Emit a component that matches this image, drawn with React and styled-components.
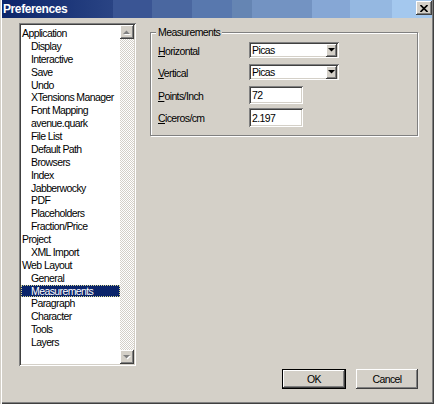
import React from "react";
import styled, { createGlobalStyle } from "styled-components";

const Global = createGlobalStyle`
  html, body { margin: 0; padding: 0; background: #d4d0c8; }
  body { overflow: hidden; }
`;

const raised = `
  box-shadow: inset -1px -1px 0 #404040, inset 1px 1px 0 #ffffff,
    inset -2px -2px 0 #808080, inset 2px 2px 0 #d4d0c8;
`;
const sunken = `
  box-shadow: inset 1px 1px 0 #808080, inset -1px -1px 0 #ffffff,
    inset 2px 2px 0 #404040, inset -2px -2px 0 #d4d0c8;
`;

const Window = styled.div`
  width: 434px;
  height: 404px;
  box-sizing: border-box;
  background: #d4d0c8;
  padding: 0 2px 2px 2px;
  box-shadow: inset 1px 0 0 #d4d0c8, inset 2px 0 0 #ffffff,
    inset -1px -1px 0 #404040, inset -2px -2px 0 #808080;
  display: flex;
  flex-direction: column;
  font-family: "Liberation Sans", Arial, sans-serif;
  font-size: 10.5px;
  letter-spacing: -0.6px;
  color: #000;
`;

const TitleBar = styled.div`
  height: 18px;
  flex: none;
  display: flex;
  align-items: center;
  justify-content: space-between;
  padding: 0 0 0 1px;
  background: linear-gradient(
    90deg,
    #0a246a 0px,
    #2a4484 111px,
    #3a5594 111px,
    #3a5594 150px,
    #4a67a0 150px,
    #4a67a0 190px,
    #5878ae 190px,
    #5878ae 230px,
    #6585b3 230px,
    #6585b3 250px,
    #7393c2 250px,
    #7393c2 310px,
    #86a7d5 310px,
    #86a7d5 348px,
    #95b8e1 348px,
    #95b8e1 390px,
    #a4c8ee 390px
  );
`;

const Title = styled.span`
  color: #fff;
  font-weight: bold;
  font-size: 12px;
  letter-spacing: -0.4px;
  line-height: 18px;
`;

const CloseButton = styled.div`
  width: 16px;
  height: 14px;
  margin-right: 0px;
  margin-top: -2px;
  background: #d4d0c8;
  ${raised}
  display: flex;
  align-items: center;
  justify-content: center;
`;

const Body = styled.div`
  flex: 1;
  display: flex;
  align-items: flex-start;
  padding: 5px 14px 0 17px;
`;

const ListBox = styled.div`
  width: 117px;
  height: 343px;
  box-sizing: border-box;
  background: #fff;
  ${sunken}
  padding: 2px;
  display: flex;
`;

const Items = styled.div`
  flex: 1;
  padding-top: 2px;
  overflow: hidden;
`;

const Item = styled.div`
  height: 12.875px;
  line-height: 12.875px;
  white-space: nowrap;
  box-sizing: border-box;
  padding-left: ${(p) => (p.$level ? 10 : 1)}px;
  background: ${(p) => (p.$selected ? "#0a246a" : "transparent")};
  color: ${(p) => (p.$selected ? "#fff" : "#000")};
  outline: ${(p) => (p.$selected ? "1px dotted #d8d890" : "none")};
  outline-offset: -1px;
`;

const ScrollBar = styled.div`
  width: 14px;
  display: flex;
  flex-direction: column;
  background: repeating-conic-gradient(#d4d0c8 0 25%, #ffffff 0 50%) 0 0 / 2px 2px;
`;

const ScrollButton = styled.div`
  width: 14px;
  height: 14px;
  flex: none;
  background: #d4d0c8;
  ${raised}
  display: flex;
  align-items: center;
  justify-content: center;
`;

const Track = styled.div`
  flex: 1;
`;

const RightColumn = styled.div`
  margin-left: 14px;
  width: 268px;
  height: 366px;
  display: flex;
  flex-direction: column;
`;

const GroupBox = styled.div`
  position: relative;
  margin-top: 9px;
  box-sizing: border-box;
  width: 268px;
  border: 1px solid #808080;
  box-shadow: 1px 1px 0 #fff, inset 1px 1px 0 #fff;
  padding: 9px 8px 8px 7px;
  display: flex;
  flex-direction: column;
`;

const Legend = styled.span`
  position: absolute;
  top: -7px;
  left: 5px;
  padding: 0 2px;
  line-height: 13px;
  background: #d4d0c8;
`;

const Row = styled.div`
  display: grid;
  grid-template-columns: 91px auto;
  align-items: center;
  margin-top: ${(p) => p.$gap || 0}px;
`;

const Label = styled.span`
  line-height: 13px;
  padding-top: 2px;
`;

const Mnemonic = styled.span`
  text-decoration: underline;
`;

const Select = styled.div`
  width: 90px;
  height: 16px;
  box-sizing: border-box;
  background: #fff;
  ${sunken}
  display: flex;
  align-items: center;
  justify-content: space-between;
  padding: 2px 2px 2px 3px;
`;

const DropButton = styled.div`
  width: 11px;
  height: 13px;
  margin-right: 0;
  margin-top: 1px;
  background: #d4d0c8;
  ${raised}
  display: flex;
  align-items: center;
  justify-content: center;
`;

const Input = styled.div`
  width: 54px;
  height: ${(p) => p.$h || 18}px;
  box-sizing: border-box;
  background: #fff;
  ${sunken}
  display: flex;
  align-items: center;
  padding: 0 3px;
`;

const Footer = styled.div`
  margin-top: auto;
  display: flex;
  justify-content: flex-end;
  gap: 10px;
`;

const Button = styled.div`
  width: ${(p) => p.$w}px;
  height: 20px;
  box-sizing: border-box;
  background: #d4d0c8;
  display: flex;
  align-items: center;
  justify-content: center;
  line-height: 13px;
  ${(p) =>
    p.$default
      ? `border: 1px solid #000;
         box-shadow: inset -1px -1px 0 #404040, inset 1px 1px 0 #ffffff, inset -2px -2px 0 #808080;`
      : raised}
`;

const UpArrow = () => (
  <svg width="8" height="5" viewBox="0 0 8 5">
    <polygon points="4.5,1.5 8,5 1,5" fill="#fff" />
    <polygon points="3.5,0.5 7,4 0,4" fill="#808080" />
  </svg>
);

const DownArrow = ({ color = "#808080", shadow = true }) => (
  <svg width="8" height="5" viewBox="0 0 8 5">
    {shadow && <polygon points="1,1 8,1 4.5,4.5" fill="#fff" />}
    <polygon points="0,0 7,0 3.5,3.5" fill={color} />
  </svg>
);

const CloseIcon = () => (
  <svg width="8" height="7" viewBox="0 0 8 7">
    <path d="M0.5 0 L7.5 7 M7.5 0 L0.5 7" stroke="#000" strokeWidth="1.6" />
  </svg>
);

const items = [
  ["Application", 0],
  ["Display", 1],
  ["Interactive", 1],
  ["Save", 1],
  ["Undo", 1],
  ["XTensions Manager", 1],
  ["Font Mapping", 1],
  ["avenue.quark", 1],
  ["File List", 1],
  ["Default Path", 1],
  ["Browsers", 1],
  ["Index", 1],
  ["Jabberwocky", 1],
  ["PDF", 1],
  ["Placeholders", 1],
  ["Fraction/Price", 1],
  ["Project", 0],
  ["XML Import", 1],
  ["Web Layout", 0],
  ["General", 1],
  ["Measurements", 1],
  ["Paragraph", 1],
  ["Character", 1],
  ["Tools", 1],
  ["Layers", 1],
];

export default function App() {
  return (
    <>
      <Global />
      <Window>
        <TitleBar>
          <Title>Preferences</Title>
          <CloseButton>
            <CloseIcon />
          </CloseButton>
        </TitleBar>
        <Body>
          <ListBox>
            <Items>
              {items.map(([name, level]) => (
                <Item key={name} $level={level} $selected={name === "Measurements"}>
                  {name}
                </Item>
              ))}
            </Items>
            <ScrollBar>
              <ScrollButton>
                <UpArrow />
              </ScrollButton>
              <Track />
              <ScrollButton>
                <DownArrow />
              </ScrollButton>
            </ScrollBar>
          </ListBox>
          <RightColumn>
            <GroupBox>
              <Legend>Measurements</Legend>
              <Row>
                <Label>
                  <Mnemonic>H</Mnemonic>orizontal
                </Label>
                <Select>
                  <span>Picas</span>
                  <DropButton>
                    <DownArrow color="#000" shadow={false} />
                  </DropButton>
                </Select>
              </Row>
              <Row $gap={6}>
                <Label>
                  <Mnemonic>V</Mnemonic>ertical
                </Label>
                <Select>
                  <span>Picas</span>
                  <DropButton>
                    <DownArrow color="#000" shadow={false} />
                  </DropButton>
                </Select>
              </Row>
              <Row $gap={6}>
                <Label>
                  <Mnemonic>P</Mnemonic>oints/Inch
                </Label>
                <Input>72</Input>
              </Row>
              <Row $gap={4}>
                <Label>
                  <Mnemonic>C</Mnemonic>iceros/cm
                </Label>
                <Input $h={19}>2.197</Input>
              </Row>
            </GroupBox>
            <Footer>
              <Button $w={64} $default>
                OK
              </Button>
              <Button $w={62}>Cancel</Button>
            </Footer>
          </RightColumn>
        </Body>
      </Window>
    </>
  );
}
